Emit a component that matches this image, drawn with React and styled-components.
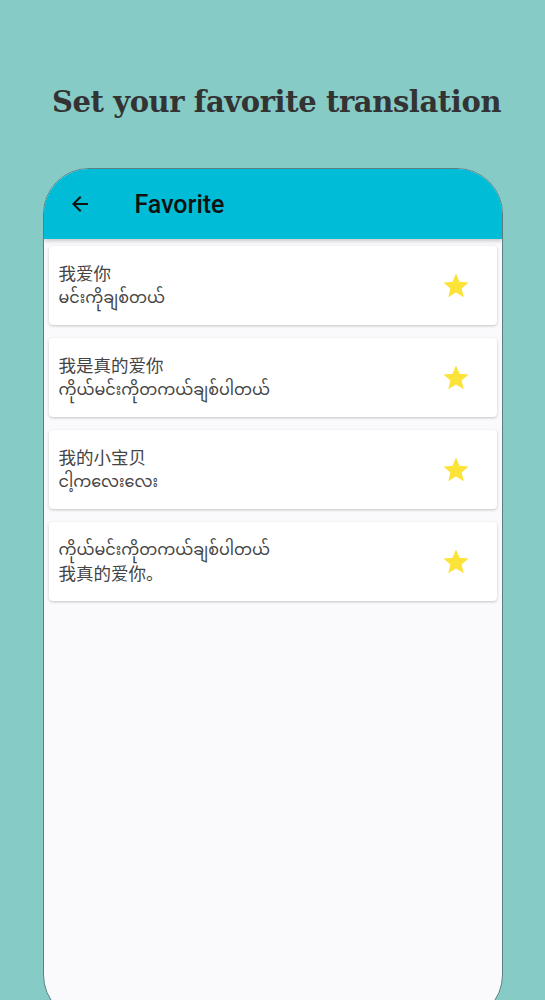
import React from "react";
import styled, { createGlobalStyle } from "styled-components";

const GlobalStyle = createGlobalStyle`
  html, body {
    margin: 0;
    padding: 0;
    background: #87cbc6;
    overflow: hidden;
  }
  body {
    font-family: Roboto, "Noto Sans", "Noto Sans Myanmar", "Noto Sans CJK SC", sans-serif;
  }
`;

const favorites = [
  { first: ["zh", "我爱你"], second: ["my", "မင်းကိုချစ်တယ်"] },
  { first: ["zh", "我是真的爱你"], second: ["my", "ကိုယ်မင်းကိုတကယ်ချစ်ပါတယ်"] },
  { first: ["zh", "我的小宝贝"], second: ["my", "ငါ့ကလေးလေး"] },
  { first: ["my", "ကိုယ်မင်းကိုတကယ်ချစ်ပါတယ်"], second: ["zh", "我真的爱你。"] },
];

const App = () => {
  return (
    <Page>
      <GlobalStyle />
      <Headline>Set your favorite translation</Headline>
      <Phone>
        <AppBar>
          <BackButton aria-label="back">
            <svg width="24" height="24" viewBox="0 0 24 24">
              <path
                d="M20 11H7.83l5.59-5.59L12 4l-8 8 8 8 1.41-1.41L7.83 13H20v-2z"
                fill="#111"
              />
            </svg>
          </BackButton>
          <AppTitle>Favorite</AppTitle>
        </AppBar>
        <List>
          {favorites.map((item, i) => (
            <Card key={i}>
              <Texts>
                <Line $lang={item.first[0]}>{item.first[1]}</Line>
                <Line $lang={item.second[0]}>{item.second[1]}</Line>
              </Texts>
              <Star viewBox="0 0 24 24">
                <path
                  d="M12 17.27L18.18 21l-1.64-7.03L22 9.24l-7.19-.61L12 2 9.19 8.63 2 9.24l5.46 4.73L5.82 21z"
                  fill="#fbe33a"
                />
              </Star>
            </Card>
          ))}
        </List>
      </Phone>
    </Page>
  );
};

export default App;

const Page = styled.div`
  width: 545px;
  height: 1000px;
  display: flex;
  flex-direction: column;
  align-items: center;
  padding-top: 82px;
  box-sizing: border-box;
`;

const Headline = styled.h1`
  margin: 0 0 0 8px;
  font-family: "DejaVu Serif", serif;
  font-weight: bold;
  font-size: 29px;
  line-height: 40px;
  color: #333;
  letter-spacing: -0.4px;
`;

const Phone = styled.div`
  margin-top: 46px;
  width: 460px;
  height: 853px;
  flex-shrink: 0;
  box-sizing: border-box;
  border: 1px solid #5b7f80;
  border-radius: 46px;
  background: #fafafc;
  overflow: hidden;
  display: flex;
  flex-direction: column;
`;

const AppBar = styled.div`
  height: 70px;
  flex-shrink: 0;
  background: #00bcd6;
  display: flex;
  align-items: center;
  padding-left: 24px;
  box-shadow: 0 2px 4px rgba(0, 0, 0, 0.2);
  position: relative;
  z-index: 1;
`;

const BackButton = styled.div`
  width: 24px;
  height: 24px;
  display: flex;
`;

const AppTitle = styled.div`
  margin-left: 43px;
  font-family: Roboto, sans-serif;
  font-weight: 500;
  font-size: 25px;
  color: #111;
`;

const List = styled.div`
  display: flex;
  flex-direction: column;
  gap: 13px;
  padding: 7px 5px 0 5px;
`;

const Card = styled.div`
  height: 79px;
  background: #fff;
  border-radius: 4px;
  box-shadow: 0 1px 3px rgba(0, 0, 0, 0.22);
  display: flex;
  align-items: center;
  justify-content: space-between;
  padding: 0 26px 0 10px;
`;

const Texts = styled.div`
  display: flex;
  flex-direction: column;
  margin-top: -2px;
`;

const Line = styled.div`
  font-family: "Noto Sans", "Noto Sans Myanmar", "Noto Sans CJK SC", sans-serif;
  font-size: ${(p) => (p.$lang === "zh" ? "17.5px" : "16px")};
  line-height: 24px;
  color: #444;
`;

const Star = styled.svg`
  width: 30px;
  height: 30px;
`;
